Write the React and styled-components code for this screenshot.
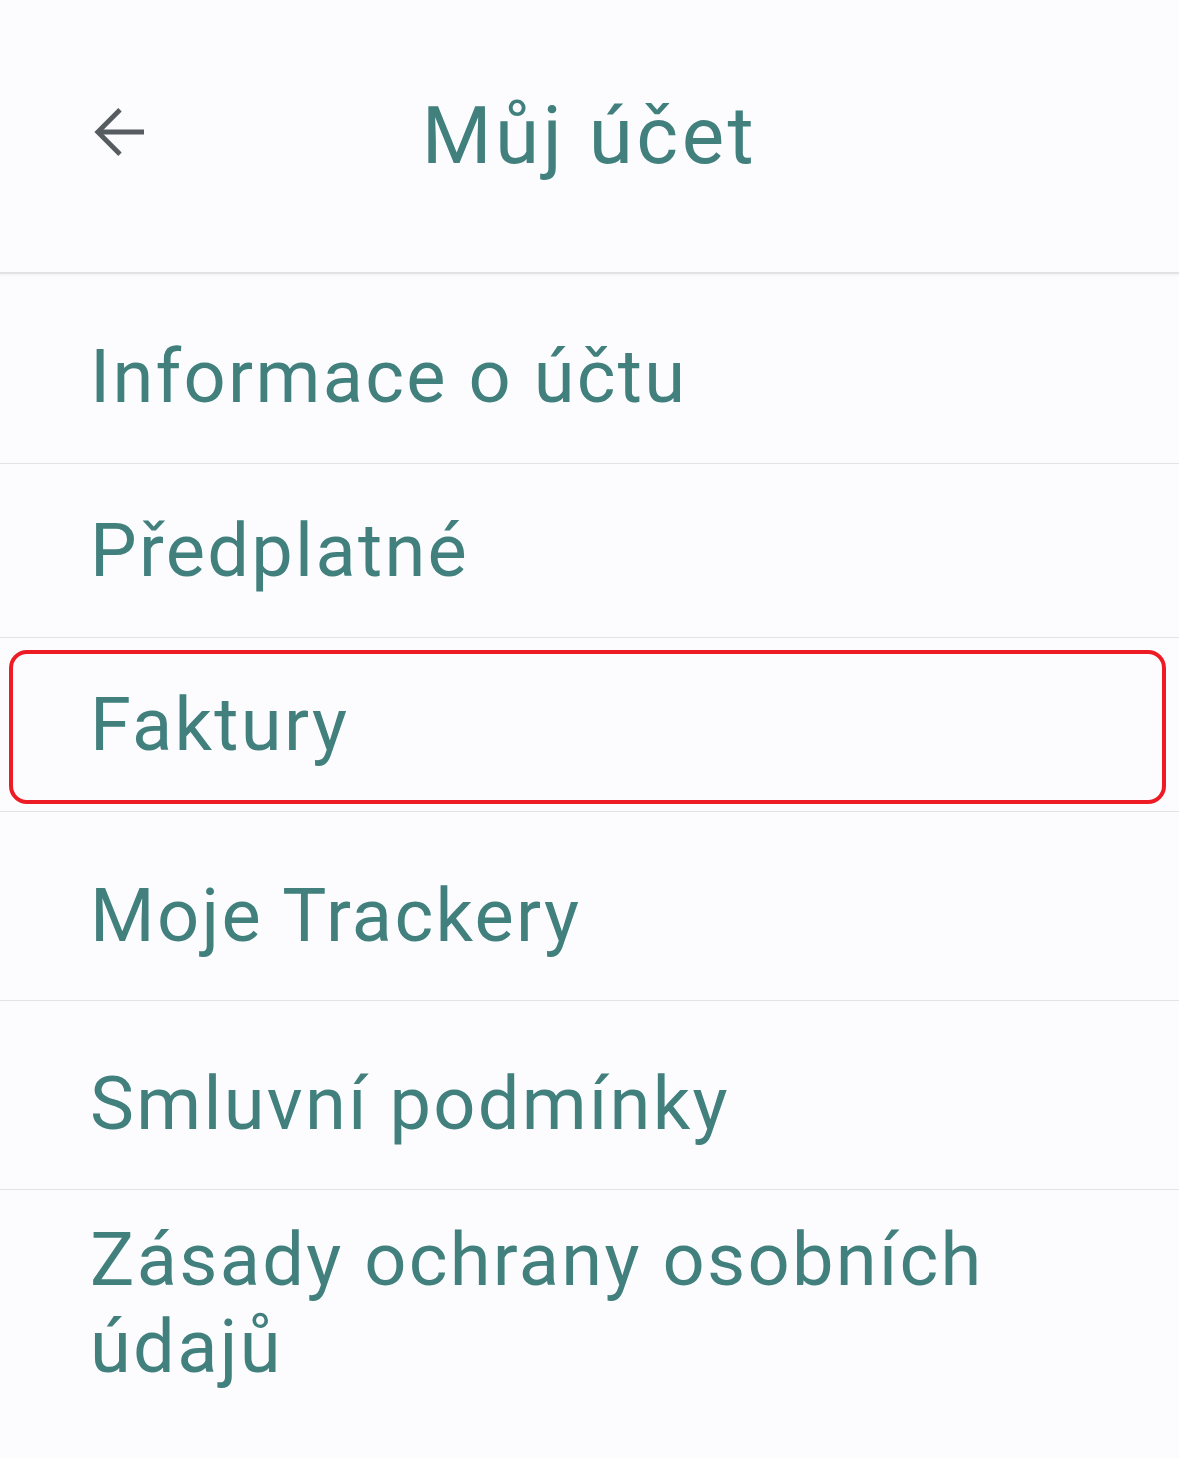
import styled, { createGlobalStyle } from 'styled-components';

const GlobalStyle = createGlobalStyle`
  html, body {
    margin: 0;
    padding: 0;
    background: #fcfcfe;
  }
  body {
    font-family: Roboto, "Noto Sans", sans-serif;
  }
`;

const Screen = styled.div`
  width: 1179px;
  min-height: 1458px;
  background: #fcfcfe;
  display: flex;
  flex-direction: column;
`;

const Header = styled.header`
  height: 274px;
  display: grid;
  grid-template-columns: 84px 72px 1fr 72px 84px;
  align-items: center;
  border-bottom: 2px solid #e2e2e4;
  box-shadow: 0 2px 2px rgba(0, 0, 0, 0.03);
  box-sizing: border-box;
  padding-bottom: 8px;
`;

const BackButton = styled.button`
  grid-column: 2;
  width: 72px;
  height: 72px;
  padding: 0;
  border: 0;
  background: none;
  color: #575c61;
  display: flex;
`;

const Title = styled.h1`
  grid-column: 3;
  margin: 0;
  text-align: center;
  font-size: 80px;
  font-weight: 400;
  letter-spacing: 3.5px;
  color: #42807e;
  line-height: 1;
  padding-top: 8px;
`;

const Menu = styled.nav`
  display: flex;
  flex-direction: column;
`;

const Row = styled.div`
  position: relative;
  height: ${({ $h }) => $h}px;
  box-sizing: border-box;
  padding: ${({ $pt }) => $pt || 0}px 40px 0 90px;
  display: flex;
  align-items: ${({ $top }) => ($top ? 'flex-start' : 'center')};
  border-bottom: ${({ $last }) => ($last ? 'none' : '1px solid #e3e3e6')};
`;

const Label = styled.span`
  font-size: 74px;
  line-height: 87px;
  letter-spacing: 2.3px;
  color: #42807e;
`;

const Highlight = styled.div`
  position: absolute;
  top: 12px;
  left: 9px;
  right: 13px;
  bottom: 7px;
  border: 4px solid #ed1c24;
  border-radius: 18px;
  pointer-events: none;
`;

const ArrowBack = () => (
  <svg width="72" height="72" viewBox="0 0 24 24" fill="none" stroke="currentColor" strokeWidth="1.6" strokeLinecap="butt" strokeLinejoin="miter">
    <path d="M20 12H5" />
    <path d="M12 4.6L4.6 12 12 19.4" />
  </svg>
);

const items = [
  { label: 'Informace o účtu', h: 190, pt: 16 },
  { label: 'Předplatné', h: 174 },
  { label: 'Faktury', h: 174, highlight: true },
  { label: 'Moje Trackery', h: 189, pt: 18 },
  { label: 'Smluvní podmínky', h: 189, pt: 16 },
  { label: 'Zásady ochrany osobních údajů', h: 269, pt: 26, top: true, last: true },
];

export default function App() {
  return (
    <Screen>
      <GlobalStyle />
      <Header>
        <BackButton aria-label="Zpět"><ArrowBack /></BackButton>
        <Title>Můj účet</Title>
      </Header>
      <Menu>
        {items.map((item) => (
          <Row key={item.label} $h={item.h} $pt={item.pt} $top={item.top} $last={item.last}>
            <Label>{item.label}</Label>
            {item.highlight && <Highlight />}
          </Row>
        ))}
      </Menu>
    </Screen>
  );
}
